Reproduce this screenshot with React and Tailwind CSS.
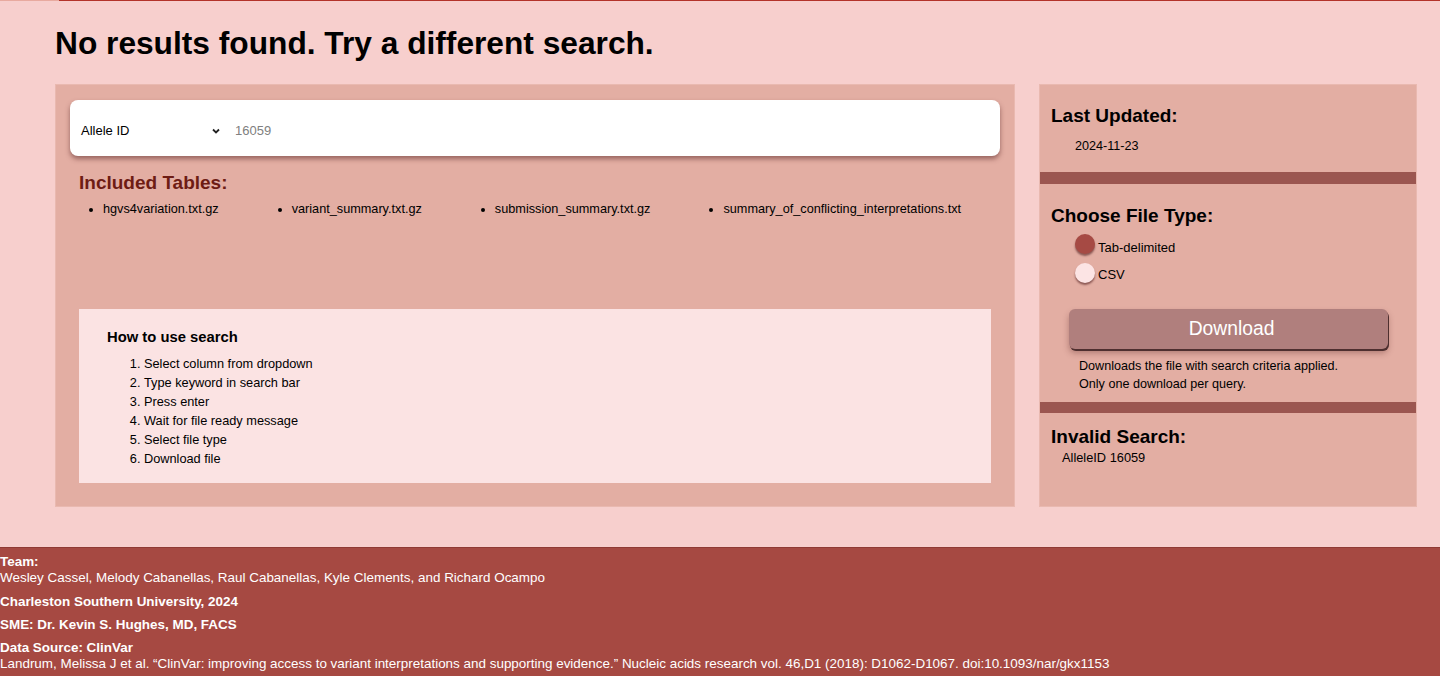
export default function App() {
  const tables = [
    "hgvs4variation.txt.gz",
    "variant_summary.txt.gz",
    "submission_summary.txt.gz",
    "summary_of_conflicting_interpretations.txt",
  ];
  const steps = [
    "Select column from dropdown",
    "Type keyword in search bar",
    "Press enter",
    "Wait for file ready message",
    "Select file type",
    "Download file",
  ];
  return (
    <div className="min-h-[676px] bg-[#f7cfcd] font-['Liberation_Sans',Arial,sans-serif] text-black">
      <div className="flex h-px">
        <div className="w-[59px] bg-[#e8aa9f]"></div>
        <div className="flex-1 bg-[#b3332a]"></div>
      </div>
      <h1 className="pl-[55px] pt-[24px] text-[31.7px] font-bold leading-[36px]">
        No results found. Try a different search.
      </h1>
      <div className="mt-[23px] flex gap-[24px] pl-[55px] pr-[23px]">
        <div className="flex h-[423px] w-[960px] flex-col border border-[#e9b9b0] bg-[#e3aea3] px-[14px] pt-[15px]">
          <div className="flex h-[56px] items-center rounded-lg bg-white pl-[11px] pt-[5px] shadow-[0_3px_5px_rgba(90,40,40,0.55)]">
            <div className="flex w-[154px] items-center justify-between pr-[14px] text-[13px]">
              <span>Allele ID</span>
              <svg width="10" height="10" viewBox="0 0 10 10">
                <path d="M2 3.5 L5 6.5 L8 3.5" fill="none" stroke="#222" strokeWidth="1.8" />
              </svg>
            </div>
            <span className="text-[13px] text-[#808080]">16059</span>
          </div>
          <div className="mt-[16px] pl-[9px] text-[19px] font-bold leading-[22px] text-[#6e1c14]">
            Included Tables:
          </div>
          <ul className="mt-[7px] flex list-disc gap-[73px] pl-[33px] text-[12.7px] leading-[16px]">
            {tables.map((t) => (
              <li key={t}>{t}</li>
            ))}
          </ul>
          <div className="ml-[9px] mr-[9px] mt-[92px] h-[174px] bg-[#fbe3e3] pl-[28px] pt-[19px]">
            <div className="text-[14.8px] font-bold leading-[18px]">How to use search</div>
            <ol className="mt-[8px] list-decimal pl-[37px] text-[12.75px] leading-[19px]">
              {steps.map((s) => (
                <li key={s}>{s}</li>
              ))}
            </ol>
          </div>
        </div>
        <div className="flex h-[423px] w-[378px] flex-col border border-[#e9b9b0] bg-[#e3aea3]">
          <div className="h-[87px] pl-[11px] pt-[20px]">
            <div className="text-[19px] font-bold leading-[22px]">Last Updated:</div>
            <div className="mt-[11px] pl-[24px] text-[12.6px] leading-[16px]">2024-11-23</div>
          </div>
          <div className="h-[12px] bg-[#9b5650]"></div>
          <div className="h-[218px] pl-[11px] pt-[21px]">
            <div className="text-[19px] font-bold leading-[22px]">Choose File Type:</div>
            <div className="mt-[7px] flex h-[20px] items-start pl-[24px]">
              <span className="h-[20px] w-[20px] rounded-full bg-[#a64a44] shadow-[0_2px_2px_rgba(80,30,30,0.6)]"></span>
              <span className="ml-[3px] mt-[6px] text-[13px] leading-[16px]">Tab-delimited</span>
            </div>
            <div className="mt-[9px] flex h-[20px] items-start pl-[24px]">
              <span className="h-[20px] w-[20px] rounded-full bg-[#fce4e4] shadow-[0_2px_2px_rgba(80,30,30,0.6)]"></span>
              <span className="ml-[3px] mt-[4px] text-[13px] leading-[16px]">CSV</span>
            </div>
            <div className="ml-[18px] mt-[26px] flex h-[40px] w-[319px] items-center justify-center rounded-md bg-[#b07f7d] pl-[6px] text-[19.3px] text-white shadow-[1px_2px_0_#4e2f2f,0_4px_6px_rgba(80,30,30,0.35)]">
              Download
            </div>
            <div className="mt-[8px] pl-[28px] text-[12.6px] leading-[18px]">
              <div>Downloads the file with search criteria applied.</div>
              <div>Only one download per query.</div>
            </div>
          </div>
          <div className="h-[11px] bg-[#9b5650]"></div>
          <div className="pl-[11px] pt-[13px]">
            <div className="text-[19px] font-bold leading-[22px]">Invalid Search:</div>
            <div className="mt-[2px] pl-[11px] text-[12.8px] leading-[16px]">AlleleID 16059</div>
          </div>
        </div>
      </div>
      <footer className="mt-[40px] border-t border-[#8f3a34] bg-[#a64942] pb-[10px] pt-[6px] text-[13.45px] leading-[16px] text-white">
        <div className="font-bold">Team:</div>
        <div>Wesley Cassel, Melody Cabanellas, Raul Cabanellas, Kyle Clements, and Richard Ocampo</div>
        <div className="mt-[8px] font-bold">Charleston Southern University, 2024</div>
        <div className="mt-[7px] font-bold">SME: Dr. Kevin S. Hughes, MD, FACS</div>
        <div className="mt-[7px] font-bold">Data Source: ClinVar</div>
        <div>
          Landrum, Melissa J et al. “ClinVar: improving access to variant interpretations and supporting evidence.” Nucleic acids research vol. 46,D1 (2018): D1062-D1067. doi:10.1093/nar/gkx1153
        </div>
      </footer>
    </div>
  );
}
